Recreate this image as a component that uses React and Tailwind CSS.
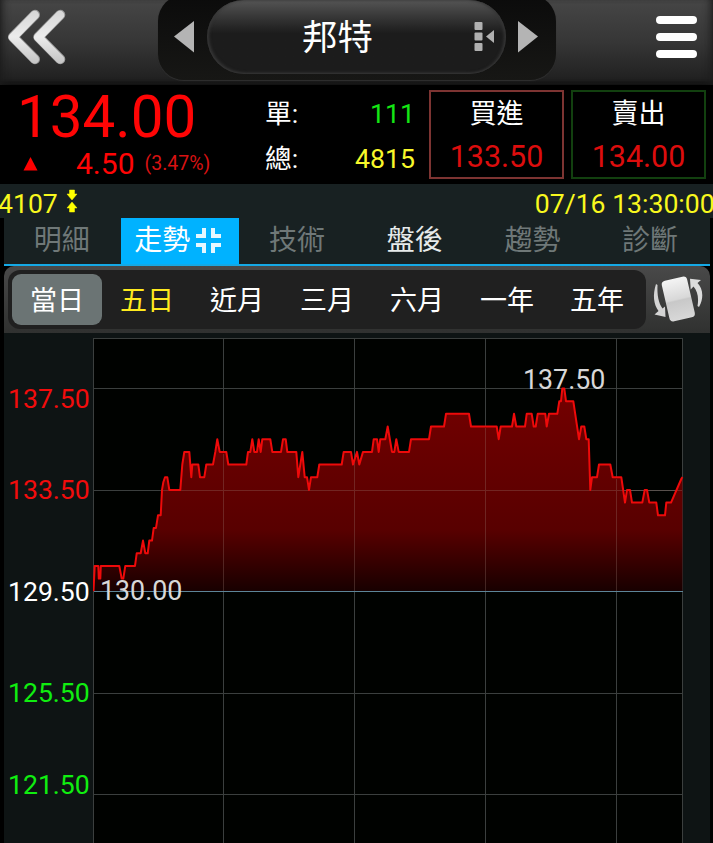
const step = (v) => 591.3 - (v - 129.5) * 25.35;

// [x, price] samples of the intraday line
const ticks = [
  [93.5, 129.5], [94.7, 130.5], [98.3, 130.5], [98.8, 130], [100.3, 130], [100.8, 130.5], [119.3, 130.5], [121.7, 130], [123.3, 130],
  [125.3, 130.5], [135, 130.5], [136.7, 131], [140.7, 131], [143, 131.5], [145.3, 131], [147.7, 131], [149.3, 131.5],
  [152, 131.5], [153.7, 132], [156, 132], [158, 132.5], [160.7, 132.5], [162, 133.5], [163.3, 133.8], [165, 134],
  [167.3, 134], [169.3, 133.5], [180.3, 133.5], [182.3, 134.5], [184.3, 135], [189.3, 135], [191.3, 134], [192.3, 134.5],
  [198.3, 134.5], [200, 134], [204.3, 134], [206.3, 134.5], [213, 134.5], [215.3, 135], [217.3, 135.5], [219.7, 135],
  [226.3, 135], [228.3, 134.5], [246.3, 134.5], [248, 135], [250.3, 135], [252.3, 135.5], [254.3, 135], [257, 135],
  [258.7, 135.5], [260.7, 135], [262.3, 135.5], [270.3, 135.5], [272.3, 135], [281, 135], [283, 135.5], [285.7, 135.5],
  [287.3, 135], [296.3, 135], [298.3, 134], [302.3, 135], [304.7, 134], [307, 134], [309, 133.5], [311, 134],
  [317.3, 134], [319.3, 134.5], [341.7, 134.5], [343.7, 135], [351, 135], [353, 134.5], [357, 135], [359.3, 134.5],
  [363, 135], [372, 135], [373.7, 135.5], [377, 135.5], [378.7, 135], [380.3, 135.5], [385.3, 135.5], [387.7, 136],
  [392, 135], [394.3, 135], [396.3, 135.5], [398.7, 135], [409, 135], [411, 135.5], [429, 135.5], [431, 136],
  [444, 136], [446, 136.5], [469, 136.5], [471, 136], [496.7, 136], [498.7, 135.5], [500.7, 136], [512, 136],
  [514, 136.5], [516.3, 136], [525, 136], [526.7, 136.5], [531.7, 136.5], [533.7, 136], [535.7, 136], [537.7, 136.5],
  [545.3, 136.5], [546.7, 136], [549, 136.5], [557.3, 136.5], [559.3, 137], [561, 137], [562.3, 137.5], [564.3, 137.5],
  [566, 137], [573.3, 137], [579, 135.5], [581.3, 136], [584.3, 136], [586.3, 135.5], [588.7, 135.5], [590.3, 133.5],
  [592, 134], [597, 134], [599, 134.5], [610.3, 134.5], [612.7, 134], [621.3, 134], [625, 133], [627, 133.5],
  [630, 133.5], [632, 133], [642.3, 133], [644.7, 133.5], [647, 133.5], [649.3, 133], [656.3, 133], [658, 132.5],
  [665, 132.5], [666.3, 133], [671, 133], [681.5, 133.95], [682.5, 134],
];
const line = ticks.map(([x, v]) => `${x},${step(v).toFixed(1)}`).join(" ");

const tabs = [
  ["明細", "-ml-[0.7px] text-[#6f7878]"],
  ["走勢", "bg-[#00b2ff] text-white"],
  ["技術", "text-[#6f7878]"],
  ["盤後", "text-[#e6eaea]"],
  ["趨勢", "text-[#6f7878]"],
  ["診斷", "text-[#6f7878]"],
];

const ranges = [
  ["當日", "bg-[#6b7474] text-white"],
  ["五日", "text-[#ffea1e]"],
  ["近月", "text-white"],
  ["三月", "text-white"],
  ["六月", "text-white"],
  ["一年", "text-white"],
  ["五年", "text-white"],
];

const axis = [
  ["137.50", "mt-[52px] text-[#f20c0c]"],
  ["133.50", "mt-[64px] text-[#f20c0c]"],
  ["129.50", "mt-[75px] text-white"],
  ["125.50", "mt-[74px] text-[#10ee10]"],
  ["121.50", "mt-[65px] text-[#10ee10]"],
];

function Header() {
  return (
    <header className="flex h-[85px] items-start bg-linear-to-b from-[#464646] via-[#363636] to-[#1e1e1e] shadow-[inset_8px_0_8px_-6px_#1c1c1c,inset_-8px_0_8px_-6px_#1c1c1c,inset_0_-5px_4px_-2px_#141414]">
      <svg className="mt-[8px] ml-[6px] shrink-0" width="62" height="58" viewBox="6 8 62 58">
        <defs>
          <linearGradient id="chev" x1="0" y1="8" x2="0" y2="66" gradientUnits="userSpaceOnUse">
            <stop offset="0" stopColor="#d4d4d4" />
            <stop offset="0.5" stopColor="#ececec" />
            <stop offset="1" stopColor="#c0c0c0" />
          </linearGradient>
        </defs>
        <g fill="none" stroke="#9a9a9a" strokeWidth="10" strokeLinecap="round" strokeLinejoin="round">
          <path d="M35 14.7 L13 37 L35 59.3" />
          <path d="M60.3 14.7 L38.3 37 L60.3 59.3" />
        </g>
        <g fill="none" stroke="url(#chev)" strokeWidth="8.6" strokeLinecap="round" strokeLinejoin="round">
          <path d="M34.7 15 L13 37.2 L34.7 59.3" />
          <path d="M60 15 L38.3 37.2 L60 59.3" />
        </g>
      </svg>
      <div className="-mt-[5px] ml-[90px] flex h-[85px] w-[398px] shrink-0 items-start rounded-[26px] bg-linear-to-b from-[#0b0b0b] to-[#171715] pt-[5px] shadow-[0_1px_1px_#303030]">
        <svg className="mt-[20px] ml-[15px]" width="22" height="34" viewBox="0 0 22 34">
          <path d="M1 16.5 L21 1 V32.5 Z" fill="#b4b4b4" />
        </svg>
        <div className="ml-[12px] flex h-[74px] w-[299px] items-start rounded-[37px] bg-linear-to-b from-[#555] via-[#1c1c1c] via-45% to-[#1c1c1c] shadow-[inset_2px_-1px_3px_#363636,inset_-2px_0_3px_#363636]">
          <span className="mt-[18px] ml-[95px] w-[72px] text-[35.5px] leading-[41px] text-white">邦特</span>
          <svg className="mt-[21px] ml-[99px]" width="22" height="31" viewBox="0 0 22 31">
            <g fill="#b0b0b0">
              <rect x="1.5" y="1" width="8" height="8" rx="1" />
              <rect x="1.5" y="11.5" width="8" height="8" rx="1" />
              <rect x="1.5" y="22" width="8" height="8" rx="1" />
              <path d="M13 15.5 L21 9 V22 Z" />
            </g>
          </svg>
        </div>
        <svg className="mt-[20px] ml-[11px]" width="22" height="34" viewBox="0 0 22 34">
          <path d="M21 16.5 L1 1 V32.5 Z" fill="#b4b4b4" />
        </svg>
      </div>
      <div className="mt-[16px] ml-[100px] flex w-[41px] shrink-0 flex-col gap-[9px]">
        <span className="h-2 rounded-full bg-white" />
        <span className="h-2 rounded-full bg-white" />
        <span className="h-2 rounded-full bg-white" />
      </div>
    </header>
  );
}

function Quote() {
  return (
    <section className="flex h-[99px] bg-black">
      <div className="w-[265px] shrink-0 pl-[17px] text-[#ff0505]">
        <div className="pt-[2px] text-[58.3px] leading-[60px]">134.00</div>
        <div className="flex h-[34px] items-center leading-[34px]">
          <svg className="ml-[6px]" width="15" height="14" viewBox="0 0 15 14">
            <path d="M7.5 0 L14.5 13.5 H0.5 Z" fill="#f00" />
          </svg>
          <span className="ml-[38px] text-[30px]">4.50</span>
          <span className="ml-[10px] text-[19.5px] text-[#d81212]">(3.47%)</span>
        </div>
      </div>
      <div className="flex w-[150px] shrink-0 flex-col text-[26.7px] leading-[46px]">
        <div className="mt-[6px] flex justify-between text-[#14e614]"><span className="text-white">單:</span><span>111</span></div>
        <div className="-mt-px flex justify-between text-[#f8f82a]"><span className="text-white">總:</span><span>4815</span></div>
      </div>
      <div className="mt-[5px] ml-[14px] h-[89px] w-[135px] shrink-0 border-2 border-[#7d3432] text-center">
        <div className="pt-[3px] text-[27px] leading-[38px] text-white">買進</div>
        <div className="pt-[6px] text-[30.5px] leading-[36px] text-[#dc0d0d]">133.50</div>
      </div>
      <div className="mt-[5px] ml-[7px] h-[89px] w-[135px] shrink-0 border-2 border-[#12400f] text-center">
        <div className="pt-[3px] text-[27px] leading-[38px] text-white">賣出</div>
        <div className="pt-[6px] text-[30.5px] leading-[36px] text-[#dc0d0d]">134.00</div>
      </div>
    </section>
  );
}

function StatusLine() {
  return (
    <section className="flex h-[34px] items-center bg-[#182122] pt-[6px] text-[26.6px] leading-[28px] text-[#f8f81e]">
      <span className="-ml-[2px]">4107</span>
      <svg className="mb-[6px] ml-[8px] shrink-0" width="12" height="24" viewBox="0 0 12 24">
        <path d="M3.5 1 H8.5 V5 H11 L6 11 L1 5 H3.5 Z M6 13 L11 19 H8.5 V23 H3.5 V19 H1 Z" fill="#ff0" stroke="#ff0" strokeWidth="0.5" />
      </svg>
      <span className="ml-[457px]">07/16&nbsp;13:30:00</span>
    </section>
  );
}

function Tabs() {
  return (
    <nav className="mr-[3px] ml-[4px] flex h-[48px] border-b-2 border-[#15a9e6] bg-[#182122] text-[28px]">
      {tabs.map(([name, tone]) => (
        <div key={name} className={`flex w-[117.7px] shrink-0 justify-center leading-[46px] ${tone}`}>
          <span className="-ml-px">{name}</span>
          {name === "走勢" && (
            <svg className="mt-[9px] mr-[2px] ml-[5px]" width="27" height="27" viewBox="0 0 27 27">
              <path d="M9 1 V9 H1 M18 1 V9 H26 M9 26 V18 H1 M18 26 V18 H26" fill="none" stroke="#e5f7ff" strokeWidth="4" />
            </svg>
          )}
        </div>
      ))}
    </nav>
  );
}

function RangeBar() {
  return (
    <section className="mr-[3px] ml-[4px] flex h-[67px] rounded-t-[10px] bg-linear-to-b from-[#494949] to-[#303130]">
      <div className="mt-[4px] ml-[4px] flex h-[59px] w-[638px] shrink-0 rounded-[12px] bg-[#202020] py-[4px] pl-[4px] text-[27px] leading-[54px]">
        {ranges.map(([name, tone]) => (
          <div key={name} className={`h-[51px] w-[90px] rounded-[9px] text-center ${tone}`}>{name}</div>
        ))}
      </div>
      <svg className="mt-[6px] ml-[6px] shrink-0" width="52" height="52" viewBox="652 272 52 52">
        <defs>
          <linearGradient id="card" x1="0" y1="0" x2="0" y2="1">
            <stop offset="0" stopColor="#f4f4f4" />
            <stop offset="0.5" stopColor="#d8d8d8" />
            <stop offset="0.54" stopColor="#c8c8c8" />
            <stop offset="1" stopColor="#d8d8d8" />
          </linearGradient>
        </defs>
        <rect x="665.3" y="278.2" width="26" height="41.6" rx="4" fill="url(#card)" transform="rotate(-13 678.3 299)" />
        <path d="M656 284 C652.5 295 653.5 304 658.5 311 L654.5 314.5 L665.5 317 L665 306.5 L662.5 308.5 C658.5 303 657 295 657.5 285 Z" fill="#d4d4d4" />
        <path d="M699 307 C704.5 297 702.5 288 697.5 283 L701 280 L690 278.8 L690.7 289.5 L693.5 286.5 C697.5 291 699 298 697.5 306 Z" fill="#dcdcdc" />
      </svg>
    </section>
  );
}

function Chart() {
  return (
    <section className="mr-[3px] ml-[4px] flex h-[510px] bg-[#0e1414]">
      <div className="w-[89px] shrink-0 pl-[4px] text-[26.6px] leading-[27px]">
        {axis.map(([label, tone]) => (
          <div key={label} className={tone}>{label}</div>
        ))}
      </div>
      <svg className="shrink-0" width="617" height="510" viewBox="93 333 617 510" fontFamily="Roboto, sans-serif">
        <defs>
          <linearGradient id="area" x1="0" y1="388" x2="0" y2="591" gradientUnits="userSpaceOnUse">
            <stop offset="0" stopColor="#740000" />
            <stop offset="0.7" stopColor="#580000" />
            <stop offset="1" stopColor="#180000" />
          </linearGradient>
        </defs>
        <rect x="93" y="338" width="590" height="505" fill="#000200" />
        <g stroke="#3b3f3e" fill="none" shapeRendering="crispEdges">
          <path d="M93 338.5H683M93 388.5H683M93 490.5H683M93 693.5H683M93 794.5H683" />
          <path d="M93.5 338V843M223.5 338V843M354.5 338V843M485.5 338V843M616.5 338V843M682.5 338V843" />
        </g>
        <polygon points={`${line} 682.5,591 93.5,591`} fill="url(#area)" />
        <g stroke="#9a7a70" strokeOpacity="0.3" fill="none" shapeRendering="crispEdges">
          <path d="M163 490.5H682M223.5 454V591M354.5 460V591M485.5 428V591M616.5 479V591" />
        </g>
        <polyline points={line} fill="none" stroke="#ee0a0a" strokeWidth="2" strokeLinejoin="round" />
        <rect x="94" y="591" width="589" height="1" fill="#5c8598" shapeRendering="crispEdges" />
        <text x="523" y="389" fontSize="26.8" fill="#d8d8d8">137.50</text>
        <text x="100" y="600" fontSize="26.8" fill="#d8d8d8">130.00</text>
      </svg>
    </section>
  );
}

export default function App() {
  return (
    <main className="h-[843px] w-[713px] overflow-hidden bg-black font-[Roboto,'Noto_Sans_CJK_TC',sans-serif] whitespace-nowrap">
      <Header />
      <Quote />
      <StatusLine />
      <Tabs />
      <RangeBar />
      <Chart />
    </main>
  );
}
